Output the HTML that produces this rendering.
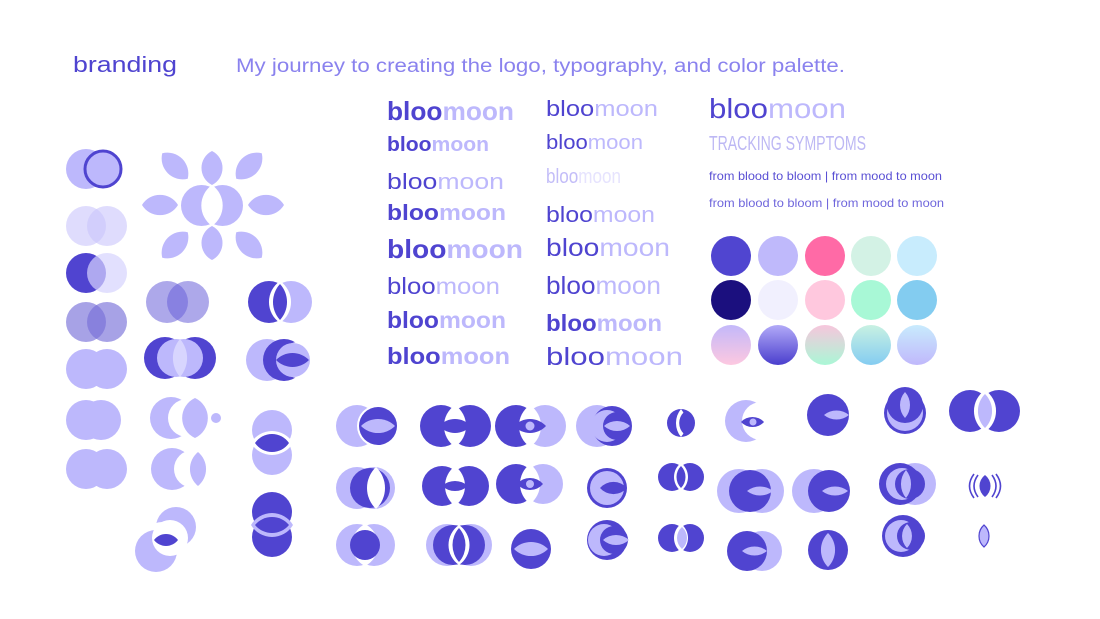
<!DOCTYPE html>
<html><head><meta charset="utf-8"><style>
html,body{margin:0;padding:0;background:#fff;}
svg{display:block;}
text{font-family:"Liberation Sans",sans-serif;}
</style></head><body>
<svg width="1100" height="619" viewBox="0 0 1100 619" xmlns="http://www.w3.org/2000/svg">
<defs>
<linearGradient id="g1" x1="0" y1="0" x2="0" y2="1"><stop offset="0" stop-color="#c3b8fa"/><stop offset="1" stop-color="#fdc8e0"/></linearGradient>
<linearGradient id="g2" x1="0" y1="0" x2="0" y2="1"><stop offset="0" stop-color="#b2aaf8"/><stop offset="1" stop-color="#4a3ecd"/></linearGradient>
<linearGradient id="g3" x1="0" y1="0" x2="0" y2="1"><stop offset="0" stop-color="#f7c6dc"/><stop offset="1" stop-color="#aaf7d6"/></linearGradient>
<linearGradient id="g4" x1="0" y1="0" x2="0" y2="1"><stop offset="0" stop-color="#c8f1e2"/><stop offset="1" stop-color="#84ccf1"/></linearGradient>
<linearGradient id="g5" x1="0" y1="0" x2="0" y2="1"><stop offset="0" stop-color="#c8ebfd"/><stop offset="1" stop-color="#c0b8fb"/></linearGradient>
</defs>

<!-- header -->
<text x="73" y="72" font-size="22" fill="#4f44d0" textLength="104" lengthAdjust="spacingAndGlyphs">branding</text>
<text x="236" y="72" font-size="19" fill="#8a82ee" textLength="609" lengthAdjust="spacingAndGlyphs">My journey to creating the logo, typography, and color palette.</text>

<!-- typography col 1 -->
<g fill="#4f44d0">
<text x="387" y="120" font-size="26" font-weight="bold" textLength="127" lengthAdjust="spacingAndGlyphs">bloo<tspan fill="#bdb8fc">moon</tspan></text>
<text x="387" y="151" font-size="20" font-weight="bold" textLength="102" lengthAdjust="spacingAndGlyphs">bloo<tspan fill="#bdb8fc">moon</tspan></text>
<text x="387" y="189" font-size="22" textLength="117" lengthAdjust="spacingAndGlyphs">bloo<tspan fill="#bdb8fc">moon</tspan></text>
<text x="387" y="220" font-size="22" font-weight="bold" textLength="119" lengthAdjust="spacingAndGlyphs">bloo<tspan fill="#bdb8fc">moon</tspan></text>
<text x="387" y="258" font-size="26" font-weight="bold" textLength="136" lengthAdjust="spacingAndGlyphs">bloo<tspan fill="#bdb8fc">moon</tspan></text>
<text x="387" y="294" font-size="23" textLength="113" lengthAdjust="spacingAndGlyphs">bloo<tspan fill="#bdb8fc">moon</tspan></text>
<text x="387" y="328" font-size="23" font-weight="bold" textLength="119" lengthAdjust="spacingAndGlyphs">bloo<tspan fill="#bdb8fc">moon</tspan></text>
<text x="387" y="364" font-size="23" font-weight="bold" textLength="123" lengthAdjust="spacingAndGlyphs">bloo<tspan fill="#bdb8fc">moon</tspan></text>
</g>
<!-- typography col 2 -->
<g fill="#4f44d0">
<text x="546" y="116" font-size="22" textLength="112" lengthAdjust="spacingAndGlyphs">bloo<tspan fill="#bdb8fc">moon</tspan></text>
<text x="546" y="149" font-size="20" textLength="97" lengthAdjust="spacingAndGlyphs">bloo<tspan fill="#bdb8fc">moon</tspan></text>
<text x="546" y="183" font-size="20" fill="#c3bdf8" textLength="75" lengthAdjust="spacingAndGlyphs">bloo<tspan fill="#e6e3fe">moon</tspan></text>
<text x="546" y="222" font-size="22" textLength="109" lengthAdjust="spacingAndGlyphs">bloo<tspan fill="#bdb8fc">moon</tspan></text>
<text x="546" y="256" font-size="25" textLength="124" lengthAdjust="spacingAndGlyphs">bloo<tspan fill="#bdb8fc">moon</tspan></text>
<text x="546" y="294" font-size="25" textLength="115" lengthAdjust="spacingAndGlyphs">bloo<tspan fill="#bdb8fc">moon</tspan></text>
<text x="546" y="331" font-size="23" font-weight="bold" textLength="116" lengthAdjust="spacingAndGlyphs">bloo<tspan fill="#bdb8fc">moon</tspan></text>
<text x="546" y="365" font-size="25" textLength="137" lengthAdjust="spacingAndGlyphs">bloo<tspan fill="#bdb8fc">moon</tspan></text>
</g>
<!-- col 3 -->
<text x="709" y="118" font-size="28" fill="#4f44d0" textLength="137" lengthAdjust="spacingAndGlyphs">bloo<tspan fill="#bdb8fc">moon</tspan></text>
<text x="709" y="150" font-size="20" fill="#bdb8f4" textLength="157" lengthAdjust="spacingAndGlyphs">TRACKING SYMPTOMS</text>
<text x="709" y="180" font-size="12" fill="#5a50d4" textLength="233" lengthAdjust="spacingAndGlyphs">from blood to bloom | from mood to moon</text>
<text x="709" y="207" font-size="12" fill="#6f66dc" textLength="235" lengthAdjust="spacingAndGlyphs">from blood to bloom | from mood to moon</text>

<!-- palette -->
<g>
<circle cx="731" cy="256" r="20" fill="#5045d0"/><circle cx="778" cy="256" r="20" fill="#bfb9fb"/><circle cx="825" cy="256" r="20" fill="#ff6aa6"/><circle cx="871" cy="256" r="20" fill="#d3f2e5"/><circle cx="917" cy="256" r="20" fill="#c8ecfd"/>
<circle cx="731" cy="300" r="20" fill="#1b0f7e"/><circle cx="778" cy="300" r="20" fill="#f1f0fe"/><circle cx="825" cy="300" r="20" fill="#ffc8de"/><circle cx="871" cy="300" r="20" fill="#a8f8d6"/><circle cx="917" cy="300" r="20" fill="#83ccf0"/>
<circle cx="731" cy="345" r="20" fill="url(#g1)"/><circle cx="778" cy="345" r="20" fill="url(#g2)"/><circle cx="825" cy="345" r="20" fill="url(#g3)"/><circle cx="871" cy="345" r="20" fill="url(#g4)"/><circle cx="917" cy="345" r="20" fill="url(#g5)"/>
</g>

<!-- left column -->
<g>
<circle cx="86" cy="169" r="20" fill="#bdb8fc"/>
<circle cx="103" cy="169" r="18" fill="#bdb8fc" stroke="#4f44d0" stroke-width="3"/>
<circle cx="86" cy="226" r="20" fill="#c9c5fc" opacity=".6"/><circle cx="107" cy="226" r="20" fill="#c9c5fc" opacity=".6"/>
<circle cx="86" cy="273" r="20" fill="#5044d0"/><circle cx="107" cy="273" r="20" fill="#d6d3fe" opacity=".7"/>
<circle cx="86" cy="322" r="20" fill="#7870d8" opacity=".65"/><circle cx="107" cy="322" r="20" fill="#7870d8" opacity=".65"/>
<circle cx="86" cy="369" r="20" fill="#bdb8fc"/><circle cx="107" cy="369" r="20" fill="#bdb8fc"/>
<circle cx="86" cy="420" r="20" fill="#bdb8fc"/><circle cx="101" cy="420" r="20" fill="#bdb8fc"/>
<circle cx="86" cy="469" r="20" fill="#bdb8fc"/><circle cx="107" cy="469" r="20" fill="#bdb8fc"/>
</g>

<!-- flower -->
<g fill="#bdb8fc">
<circle cx="201.5" cy="205.5" r="20.5"/><circle cx="222.5" cy="205.5" r="20.5"/>
<path d="M212,185A25,25 0 0 1 212,226A25,25 0 0 1 212,185Z" fill="#fff"/>
<path d="M212,151A19,19 0 0 1 212,185A19,19 0 0 1 212,151Z"/>
<path d="M212,226A19,19 0 0 1 212,260A19,19 0 0 1 212,226Z"/>
<path d="M142,205A21,21 0 0 1 178,205A21,21 0 0 1 142,205Z"/>
<path d="M248,205A21,21 0 0 1 284,205A21,21 0 0 1 248,205Z"/>
<path d="M-18,0A21,21 0 0 1 18,0A21,21 0 0 1 -18,0Z" transform="translate(175,166) rotate(45)"/>
<path d="M-18,0A21,21 0 0 1 18,0A21,21 0 0 1 -18,0Z" transform="translate(249,166) rotate(-45)"/>
<path d="M-18,0A21,21 0 0 1 18,0A21,21 0 0 1 -18,0Z" transform="translate(175,245) rotate(-45)"/>
<path d="M-18,0A21,21 0 0 1 18,0A21,21 0 0 1 -18,0Z" transform="translate(249,245) rotate(45)"/>
</g>

<!-- col 2 marks -->
<g>
<circle cx="167" cy="302" r="21" fill="#6a60d8" opacity=".55"/><circle cx="188" cy="302" r="21" fill="#6a60d8" opacity=".55"/>
<circle cx="165" cy="358" r="21" fill="#5044d0"/><circle cx="195" cy="358" r="21" fill="#5044d0"/>
<circle cx="176" cy="358" r="19" fill="#bdb8fc"/><circle cx="184" cy="358" r="19" fill="#bdb8fc"/>
<path d="M180,339A29,29 0 0 1 180,377A29,29 0 0 1 180,339Z" fill="#d8d5fe"/>
<circle cx="171" cy="418" r="21" fill="#bdb8fc"/><circle cx="187" cy="418" r="19" fill="#fff"/>
<path d="M195,398A22,22 0 0 1 195,438A22,22 0 0 1 195,398Z" fill="#bdb8fc"/>
<circle cx="216" cy="418" r="5" fill="#bdb8fc"/>
<circle cx="172" cy="469" r="21" fill="#bdb8fc"/><circle cx="193" cy="469" r="19" fill="#fff"/>
<path d="M198,452A22,22 0 0 1 198,486A22,22 0 0 1 198,452Z" fill="#bdb8fc"/>
<circle cx="176" cy="527" r="20" fill="#bdb8fc"/><circle cx="162" cy="540" r="18" fill="#fff"/>
<circle cx="156" cy="551" r="21" fill="#bdb8fc"/><circle cx="170" cy="538" r="18" fill="#fff"/>
<path d="M154,540A15,15 0 0 1 178,540A15,15 0 0 1 154,540Z" fill="#5044d0"/>
</g>

<!-- col 3 marks -->
<g>
<circle cx="269" cy="302" r="21" fill="#5044d0"/><circle cx="291" cy="302" r="21" fill="#bdb8fc"/>
<path d="M280,281A25.5,25.5 0 0 1 280,323A25.5,25.5 0 0 1 280,281Z" fill="#fff"/>
<path d="M280,284A26.6,26.6 0 0 1 280,320A26.6,26.6 0 0 1 280,284Z" fill="#5044d0"/>
<circle cx="267" cy="360" r="21" fill="#bdb8fc"/><circle cx="284" cy="360" r="21" fill="#5044d0"/>
<circle cx="298" cy="360" r="18" fill="#fff"/>
<circle cx="293" cy="360" r="17" fill="#bdb8fc"/>
<path d="M276,360A23,23 0 0 1 309,360A23,23 0 0 1 276,360Z" fill="#5044d0"/>
<circle cx="272" cy="430" r="20" fill="#bdb8fc"/><circle cx="272" cy="455" r="20" fill="#bdb8fc"/>
<path d="M251,443A24.4,24.4 0 0 1 293,443A24.4,24.4 0 0 1 251,443Z" fill="#fff"/>
<path d="M255,443A20.5,20.5 0 0 1 289,443A20.5,20.5 0 0 1 255,443Z" fill="#5044d0"/>
<circle cx="272" cy="512" r="20" fill="#5044d0"/><circle cx="272" cy="537" r="20" fill="#5044d0"/>
<path d="M251,525A24.4,24.4 0 0 1 293,525A24.4,24.4 0 0 1 251,525Z" fill="#bdb8fc"/>
<path d="M255,525A22,22 0 0 1 289,525A22,22 0 0 1 255,525Z" fill="#5044d0"/>
</g>

<!-- bottom grid row 1 -->
<g>
<circle cx="357" cy="426" r="21" fill="#bdb8fc"/><circle cx="378" cy="426" r="21" fill="#fff"/>
<circle cx="378" cy="426" r="19" fill="#5044d0"/>
<path d="M361,426A24,24 0 0 1 395,426A24,24 0 0 1 361,426Z" fill="#bdb8fc"/>

<circle cx="441" cy="426" r="21" fill="#5044d0"/><circle cx="470" cy="426" r="21" fill="#5044d0"/>
<path d="M455,405A25.5,25.5 0 0 1 455,447A25.5,25.5 0 0 1 455,405Z" fill="#fff"/>
<path d="M439,426A21.8,21.8 0 0 1 471,426A21.8,21.8 0 0 1 439,426Z" fill="#5044d0"/>

<circle cx="516" cy="426" r="21" fill="#5044d0"/><circle cx="545" cy="426" r="21" fill="#bdb8fc"/>
<path d="M530,405A25.5,25.5 0 0 1 530,447A25.5,25.5 0 0 1 530,405Z" fill="#fff"/>
<path d="M514,426A21.8,21.8 0 0 1 546,426A21.8,21.8 0 0 1 514,426Z" fill="#5044d0"/>
<circle cx="530" cy="426" r="4.5" fill="#bdb8fc"/>

<circle cx="597" cy="426" r="21" fill="#bdb8fc"/><circle cx="612" cy="426" r="20" fill="#5044d0"/>
<circle cx="607" cy="426" r="16" fill="#bdb8fc"/><circle cx="617" cy="426" r="14" fill="#5044d0"/>
<path d="M604,426A19.4,19.4 0 0 1 630,426A19.4,19.4 0 0 1 604,426Z" fill="#bdb8fc"/>

<circle cx="681" cy="423" r="14" fill="#5044d0"/>
<path d="M681,409A22,22 0 0 1 681,437A22,22 0 0 1 681,409Z" fill="#fff"/>
<path d="M684,412A15,15 0 0 1 684,434A15,15 0 0 1 684,412Z" fill="#5044d0"/>

<circle cx="746" cy="421" r="21" fill="#bdb8fc"/><circle cx="761" cy="421" r="19" fill="#fff"/>
<path d="M741,422A15.7,15.7 0 0 1 764,422A15.7,15.7 0 0 1 741,422Z" fill="#5044d0"/><circle cx="753" cy="422" r="3.5" fill="#bdb8fc"/>

<circle cx="828" cy="415" r="21" fill="#5044d0"/>
<path d="M824,415A19.6,19.6 0 0 1 849,415A19.6,19.6 0 0 1 824,415Z" fill="#bdb8fc"/>

<circle cx="905" cy="413" r="21" fill="#5044d0"/>
<circle cx="905" cy="413" r="18" fill="#bdb8fc"/><circle cx="905" cy="405" r="18" fill="#5044d0"/>
<path d="M905,392A19.4,19.4 0 0 1 905,418A19.4,19.4 0 0 1 905,392Z" fill="#bdb8fc"/>

<circle cx="970" cy="411" r="21" fill="#5044d0"/><circle cx="999" cy="411" r="21" fill="#5044d0"/>
<path d="M985,390A25.5,25.5 0 0 1 985,432A25.5,25.5 0 0 1 985,390Z" fill="#fff"/>
<path d="M985,394A24,24 0 0 1 985,428A24,24 0 0 1 985,394Z" fill="#bdb8fc"/>
</g>

<!-- row 2 -->
<g>
<circle cx="357" cy="488" r="21" fill="#bdb8fc"/><circle cx="374" cy="488" r="21" fill="#bdb8fc"/>
<circle cx="370" cy="488" r="20" fill="#5044d0"/>
<path d="M376,467A29,29 0 0 1 376,509A29,29 0 0 1 376,467Z" fill="#fff"/>

<circle cx="442" cy="486" r="20" fill="#5044d0"/><circle cx="469" cy="486" r="20" fill="#5044d0"/>
<path d="M455,466A25,25 0 0 1 455,506A25,25 0 0 1 455,466Z" fill="#fff"/>
<path d="M442,486A19.4,19.4 0 0 1 468,486A19.4,19.4 0 0 1 442,486Z" fill="#5044d0"/>

<circle cx="516" cy="484" r="20" fill="#5044d0"/><circle cx="543" cy="484" r="20" fill="#bdb8fc"/>
<path d="M530,464A25,25 0 0 1 530,504A25,25 0 0 1 530,464Z" fill="#fff"/>
<path d="M517,484A17,17 0 0 1 543,484A17,17 0 0 1 517,484Z" fill="#5044d0"/><circle cx="530" cy="484" r="4" fill="#bdb8fc"/>

<circle cx="607" cy="488" r="20" fill="#5044d0"/><circle cx="607" cy="488" r="17" fill="#bdb8fc"/>
<path d="M600,488A18,18 0 0 1 627,488A18,18 0 0 1 600,488Z" fill="#5044d0"/>

<circle cx="672" cy="477" r="14" fill="#5044d0"/><circle cx="690" cy="477" r="14" fill="#5044d0"/>
<path d="M681,463A17.5,17.5 0 0 1 681,491A17.5,17.5 0 0 1 681,463Z" fill="#fff"/>
<path d="M681,466A15.7,15.7 0 0 1 681,488A15.7,15.7 0 0 1 681,466Z" fill="#5044d0"/>

<circle cx="739" cy="491" r="22" fill="#bdb8fc"/><circle cx="762" cy="491" r="22" fill="#bdb8fc"/>
<circle cx="750" cy="491" r="21" fill="#5044d0"/>
<path d="M747,491A21,21 0 0 1 773,491A21,21 0 0 1 747,491Z" fill="#bdb8fc"/>

<circle cx="814" cy="491" r="22" fill="#bdb8fc"/><circle cx="829" cy="491" r="21" fill="#5044d0"/>
<path d="M822,491A21,21 0 0 1 848,491A21,21 0 0 1 822,491Z" fill="#bdb8fc"/>

<circle cx="915" cy="484" r="21" fill="#bdb8fc"/><circle cx="900" cy="484" r="21" fill="#5044d0"/>
<circle cx="902" cy="484" r="16" fill="#bdb8fc"/><circle cx="910" cy="484" r="15" fill="#5044d0"/>
<path d="M906,470A22,22 0 0 1 906,498A22,22 0 0 1 906,470Z" fill="#bdb8fc"/>

<path d="M985,475A13.7,13.7 0 0 1 985,497A13.7,13.7 0 0 1 985,475Z" fill="#5044d0"/>
<g fill="none" stroke="#5044d0" stroke-width="1.6">
<path d="M978,475Q970,486 978,497"/><path d="M974,474Q965,486 974,498"/>
<path d="M992,475Q1000,486 992,497"/><path d="M996,474Q1005,486 996,498"/>
</g>
</g>

<!-- row 3 -->
<g>
<circle cx="357" cy="545" r="21" fill="#bdb8fc"/><circle cx="374" cy="545" r="21" fill="#bdb8fc"/>
<path d="M365,524A23.5,23.5 0 0 1 365,566A23.5,23.5 0 0 1 365,524Z" fill="#fff"/>
<circle cx="365" cy="545" r="15" fill="#5044d0"/>

<circle cx="447" cy="545" r="21" fill="#bdb8fc"/><circle cx="471" cy="545" r="21" fill="#bdb8fc"/>
<circle cx="453" cy="545" r="20" fill="#5044d0"/><circle cx="465" cy="545" r="20" fill="#5044d0"/>
<path d="M459,525A24.3,24.3 0 0 1 459,565A24.3,24.3 0 0 1 459,525Z" fill="#fff"/>
<path d="M459,528A25.5,25.5 0 0 1 459,562A25.5,25.5 0 0 1 459,528Z" fill="#5044d0"/>

<circle cx="531" cy="549" r="20" fill="#5044d0"/>
<path d="M514,549A24,24 0 0 1 548,549A24,24 0 0 1 514,549Z" fill="#bdb8fc"/>

<circle cx="607" cy="540" r="20" fill="#5044d0"/><circle cx="604" cy="540" r="16" fill="#bdb8fc"/>
<circle cx="614" cy="540" r="14" fill="#5044d0"/>
<path d="M603,540A19.4,19.4 0 0 1 629,540A19.4,19.4 0 0 1 603,540Z" fill="#bdb8fc"/>

<circle cx="672" cy="538" r="14" fill="#5044d0"/><circle cx="690" cy="538" r="14" fill="#5044d0"/>
<path d="M681,524A17.5,17.5 0 0 1 681,552A17.5,17.5 0 0 1 681,524Z" fill="#fff"/>
<path d="M682,527A14.6,14.6 0 0 1 682,549A14.6,14.6 0 0 1 682,527Z" fill="#bdb8fc"/>

<circle cx="762" cy="551" r="20" fill="#bdb8fc"/><circle cx="747" cy="551" r="20" fill="#5044d0"/>
<path d="M742,551A19.6,19.6 0 0 1 767,551A19.6,19.6 0 0 1 742,551Z" fill="#bdb8fc"/>

<circle cx="828" cy="550" r="20" fill="#5044d0"/>
<path d="M828,533A24,24 0 0 1 828,567A24,24 0 0 1 828,533Z" fill="#bdb8fc"/>

<circle cx="903" cy="536" r="21" fill="#5044d0"/><circle cx="901" cy="536" r="16" fill="#bdb8fc"/>
<circle cx="911" cy="536" r="14" fill="#5044d0"/>
<path d="M907,524A17,17 0 0 1 907,548A17,17 0 0 1 907,524Z" fill="#bdb8fc"/>

<path d="M984,525A14.6,14.6 0 0 1 984,547A14.6,14.6 0 0 1 984,525Z" fill="#bdb8fc" stroke="#5044d0" stroke-width="1.2"/>
</g>
</svg>
</body></html>
